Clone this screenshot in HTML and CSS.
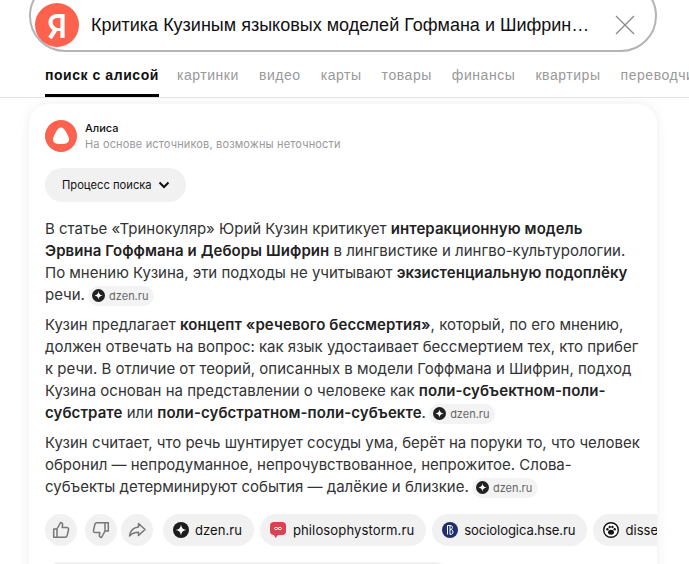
FILE: index.html
```html
<!DOCTYPE html>
<html lang="ru">
<head>
<meta charset="utf-8">
<title>Критика Кузиным</title>
<link rel="stylesheet" href="styles.css">
</head>
<body>
<header class="search">
  <svg class="logo" viewBox="0 0 44 44"><circle cx="22" cy="22" r="22" fill="#fc624d"/><path d="M27.500 35V13h-5c-4.500 0-7 2.800-7 6.300 0 3.500 2 5.500 5 7.200L15 35" fill="none" stroke="#fff" stroke-width="4.200"/><path d="M27 26.500h-6.500" stroke="#fff" stroke-width="3"/></svg>
  <div class="query">Критика Кузиным языковых моделей Гофмана и Шифрин…</div>
  <svg class="clear" viewBox="0 0 20 20"><path d="M1 1l18 18M19 1L1 19" stroke="#8a8a8a" stroke-width="1.3" fill="none"/></svg>
</header>
<nav class="tabs">
  <span class="tab active">поиск с алисой</span>
  <span class="tab">картинки</span>
  <span class="tab">видео</span>
  <span class="tab">карты</span>
  <span class="tab">товары</span>
  <span class="tab">финансы</span>
  <span class="tab">квартиры</span>
  <span class="tab">переводчик</span>
</nav>
<main class="card">
  <div class="author">
    <svg class="alice" viewBox="0 0 32 32"><circle cx="16" cy="16" r="16" fill="#fc624d"/><path d="M16 7.5c-2 0-3.400 1.700-5 4.400-1.700 3-3 5.300-3 7.500 0 3 2.600 4.600 8 4.600s8-1.600 8-4.600c0-2.200-1.300-4.500-3-7.500-1.600-2.700-3-4.400-5-4.400z" fill="#fff"/></svg>
    <div class="author-text">
      <div class="author-name">Алиса</div>
      <div class="author-note">На основе источников, возможны неточности</div>
    </div>
  </div>
  <button class="process">Процесс поиска
    <svg class="chev" viewBox="0 0 12 8"><path d="M1.500 1.500L6 6l4.500-4.500" fill="none" stroke="#111" stroke-width="2"/></svg>
  </button>
  <p class="para">В статье «Тринокуляр» Юрий Кузин критикует <b>интеракционную модель Эрвина Гоффмана и Деборы Шифрин</b> в лингвистике и лингво-культурологии. По мнению Кузина, эти подходы не учитывают <b>экзистенциальную подоплёку</b> речи. <span class="cite"><svg class="dz" viewBox="0 0 14 14"><circle cx="7" cy="7" r="7" fill="#222"/><path d="M7 2.500c.3 3 1.500 4.200 4.500 4.500-3 .3-4.200 1.500-4.500 4.500-.3-3-1.500-4.200-4.500-4.500 3-.3 4.200-1.500 4.500-4.500z" fill="#fff"/></svg>dzen.ru</span></p>
  <p class="para">Кузин предлагает <b>концепт «речевого бессмертия»</b>, который, по его мнению, должен отвечать на вопрос: как язык удостаивает бессмертием тех, кто прибег к речи. В отличие от теорий, описанных в модели Гоффмана и Шифрин, подход Кузина основан на представлении о человеке как <b>поли-субъектном-поли-субстрате</b> или <b>поли-субстратном-поли-субъекте</b>. <span class="cite"><svg class="dz" viewBox="0 0 14 14"><circle cx="7" cy="7" r="7" fill="#222"/><path d="M7 2.500c.3 3 1.500 4.200 4.500 4.500-3 .3-4.200 1.500-4.500 4.500-.3-3-1.500-4.200-4.500-4.500 3-.3 4.200-1.500 4.500-4.500z" fill="#fff"/></svg>dzen.ru</span></p>
  <p class="para">Кузин считает, что речь шунтирует сосуды ума, берёт на поруки то, что человек обронил — непродуманное, непрочувствованное, непрожитое. Слова-субъекты детерминируют события — далёкие и близкие. <span class="cite"><svg class="dz" viewBox="0 0 14 14"><circle cx="7" cy="7" r="7" fill="#222"/><path d="M7 2.500c.3 3 1.500 4.200 4.500 4.500-3 .3-4.200 1.500-4.500 4.500-.3-3-1.500-4.200-4.500-4.500 3-.3 4.200-1.500 4.500-4.500z" fill="#fff"/></svg>dzen.ru</span></p>
  <div class="actions">
    <span class="round"><svg viewBox="0 0 20 20"><path d="M6 9l3.500-6.500c1.500 0 2.300 1 2.100 2.400L11.200 7.500h4.600c1.300 0 2 1 1.700 2.200l-1.400 6c-.2 1-1 1.600-2 1.600H6zM6 9H2.700v8.300H6" fill="none" stroke="#777" stroke-width="1.500" stroke-linejoin="round"/></svg></span>
    <span class="round dislike"><svg viewBox="0 0 20 20"><path d="M14 11l-3.500 6.500c-1.500 0-2.300-1-2.100-2.400l.4-2.600H4.200c-1.300 0-2-1-1.700-2.200l1.400-6c.2-1 1-1.600 2-1.600H14zM14 11h3.300V2.700H14" fill="none" stroke="#777" stroke-width="1.500" stroke-linejoin="round"/></svg></span>
    <span class="round share"><svg viewBox="0 0 20 20"><path d="M11.500 3.500L18 9.500l-6.500 6v-3.300c-3.700 0-6.600 1-9 3.800.7-4.800 3.500-8.300 9-8.900z" fill="none" stroke="#777" stroke-width="1.500" stroke-linejoin="round"/></svg></span>
    <span class="chip"><svg class="fav" viewBox="0 0 16 16"><circle cx="8" cy="8" r="8" fill="#1c1c1c"/><path d="M8 2.500c.4 3.500 2 5.100 5.500 5.500-3.500.4-5.100 2-5.500 5.500-.4-3.500-2-5.100-5.500-5.500 3.500-.4 5.100-2 5.500-5.500z" fill="#fff"/></svg>dzen.ru</span>
    <span class="chip chip-wide"><svg class="fav" viewBox="0 0 16 16"><rect x="0" y="0" width="16" height="13" rx="4" fill="#d9424e"/><path d="M4 13h4l-2.500 3z" fill="#d9424e"/><path d="M8 6.500c-1-1.500-3.500-1.500-3.500 0S7 8 8 6.500s3.500-1.500 3.500 0S9 8 8 6.500z" fill="none" stroke="#fff" stroke-width="1"/></svg>philosophystorm.ru</span>
    <span class="chip chip-tight"><svg class="fav" viewBox="0 0 16 16"><circle cx="8" cy="8" r="8" fill="#1f2f6e"/><path d="M5.500 3.500v9M5.500 3.500h2.500v9M8 3.500c2 0 2.500 1 2.500 2S9.500 7.500 8 7.500c2 0 3 1 3 2.500s-1 2.500-3 2.500" fill="none" stroke="#fff" stroke-width="1"/></svg>sociologica.hse.ru</span>
    <span class="chip"><svg class="fav" viewBox="0 0 16 16"><circle cx="8" cy="8" r="7.300" fill="#fff" stroke="#111" stroke-width="1.400"/><ellipse cx="8" cy="10.300" rx="3" ry="2.500" fill="#111"/><circle cx="4.400" cy="7.300" r="1.200" fill="#111"/><circle cx="6.700" cy="5" r="1.200" fill="#111"/><circle cx="9.500" cy="5" r="1.200" fill="#111"/><circle cx="11.700" cy="7.300" r="1.200" fill="#111"/></svg>dissercat.com</span>
  </div>
  <div class="next"></div>
</main>
</body>
</html>
```
FILE: styles.css
```css
* { box-sizing: border-box; }
html, body { margin: 0; height: 564px; overflow: hidden; }
body { background: #fff; font-family: "Inter", "Roboto", "Liberation Sans", sans-serif; color: #222; width: 689px; }
.search {
  display: flex; align-items: center; width: 628px; height: 72px; margin: -20px 0 0 29px;
  border: 2px solid #b4b4b4; border-radius: 36px; padding: 18px 0 0 4px; background: #fff;
}
.logo { width: 44px; height: 44px; flex: none; }
.query { font: 18px/24px "Liberation Sans", Arial, sans-serif; color: #111; margin-left: 12px; width: 510px; white-space: nowrap; }
.clear { width: 20px; height: 20px; margin-left: 14px; flex: none; }
.tabs { display: flex; gap: 20px; height: 46px; padding-left: 45px; border-bottom: 1px solid #e4e4e4; white-space: nowrap; overflow: hidden; }
.tab { font: 14px/46px "Liberation Sans", Arial, sans-serif; letter-spacing: .55px; color: #999; height: 45px; }
.tab.active { font-weight: 700; color: #111; border-bottom: 3px solid #000; letter-spacing: .55px; margin-right: -2px; }
.card {
  width: 628px; height: 480px; margin: 6px 0 0 29px; padding: 16px 0 0 16px; border-radius: 20px 20px 0 0;
  background: #fff; box-shadow: 0 0 12px rgba(0,0,0,.07); overflow: hidden;
}
.author { display: flex; gap: 8px; height: 32px; align-items: center; }
.alice { width: 32px; height: 32px; flex: none; }
.author-name { font-size: 11px; line-height: 16px; font-weight: 500; color: #111; }
.author-note { font-size: 11px; line-height: 16px; color: #999; letter-spacing: .15px; }
.process {
  display: flex; align-items: center; gap: 6px; height: 34px; margin: 16px 0; padding: 0 16px 0 17px; border: 0; border-radius: 17px;
  background: #f1f1f1; font: 400 11.200px "Inter", sans-serif; color: #111;
}
.chev { width: 12px; height: 8px; }
.para { width: 596px; margin: 0 0 8px; font-size: 15px; line-height: 22px; color: #333; letter-spacing: -.01px; }
.para b { font-weight: 600; color: #222; letter-spacing: .08px; }
.cite { display: inline-flex; align-items: center; gap: 4px; height: 20px; margin: -2px 0 -2px -1px; padding: 0 6px 0 4px; border-radius: 10px; background: #f3f3f3; font-size: 11px; line-height: 20px; color: #666; vertical-align: middle; }
.dz { width: 13px; height: 13px; }
.actions { display: flex; align-items: center; gap: 6px; margin-top: 16px; width: 612px; overflow: hidden; }
.round { flex: none; display: flex; align-items: center; justify-content: center; width: 32px; height: 32px; border-radius: 50%; background: #f1f1f1; }
.round svg { width: 20px; height: 20px; }
.dislike { margin-left: 2px; margin-right: -2px; }
.share { margin-right: 4px; }
.chip { flex: none; display: flex; align-items: center; gap: 6px; height: 32px; padding: 0 12px 0 10px; border-radius: 16px; background: #f1f1f1; font-size: 13.100px; color: #111; }
.chip-wide { gap: 7px; letter-spacing: .1px; }
.chip-tight { letter-spacing: -.1px; }
.fav { width: 16px; height: 16px; }
.next { width: 405px; height: 30px; margin-top: 16px; border-radius: 16px; background: #f1f1f1; }
```
